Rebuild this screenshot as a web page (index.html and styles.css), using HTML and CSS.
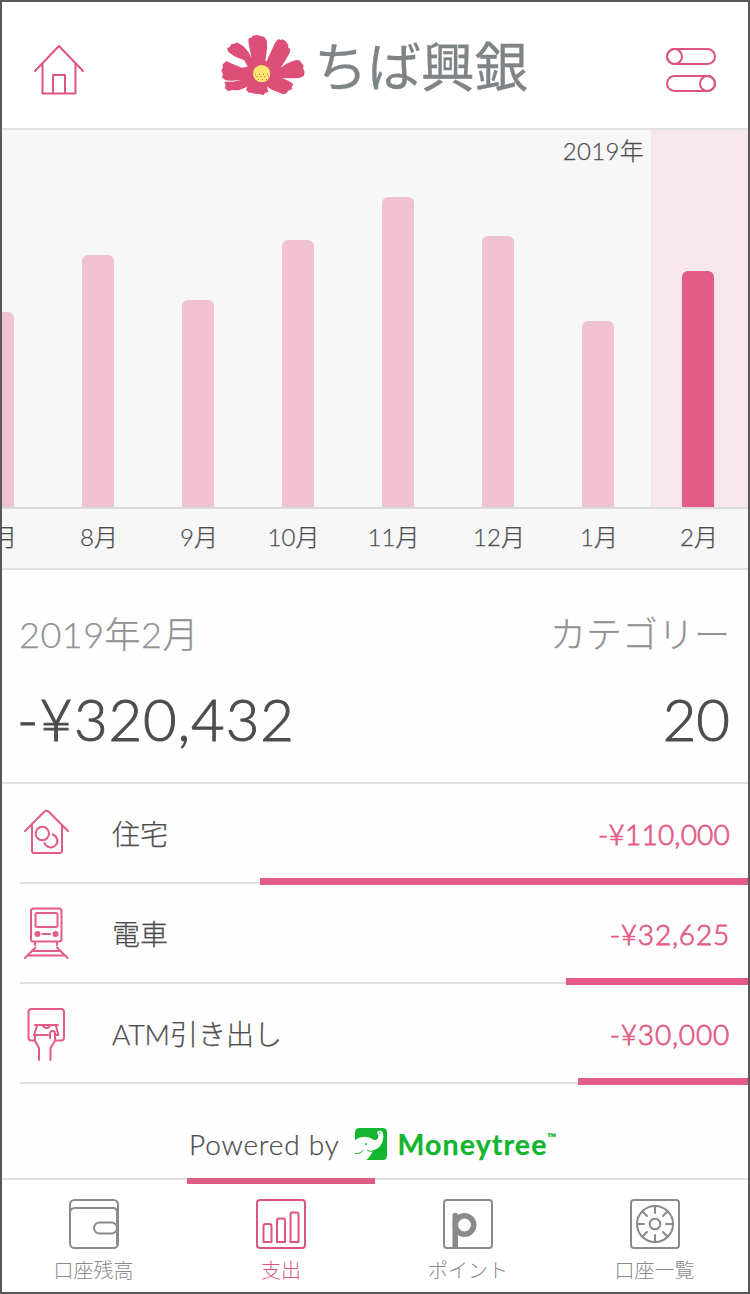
FILE: index.html
```html
<!DOCTYPE html>
<html lang="ja">
<head>
  <meta charset="UTF-8" />
  <meta name="viewport" content="width=device-width, initial-scale=1" />
  <title>ちば興銀</title>
  <link rel="stylesheet" href="styles.css">
</head>

<body>
  <div class="app">
    <div class="header">
      <svg class="icon" width="50" height="52" viewBox="0 0 50 52">
        <path d="M1 27 L25 2 L49 27 M8.500 20 V49.500 H41.500 V20 M19 49 V31 H31 V49" />
      </svg>
      <div class="logo">
        <svg class="flower" width="84" height="60" viewBox="36 30 252 180">
          <path fill="#dc4f78" d="M106 106 L80 96 L58 81 L54 69 L62 66 L68 56 L78 56 L82 52 L98 60 L106 66 L120 84 L127 98 L124 80 L118 50 L119 40 L127 38 L131 32 L146 30 L154 33 L166 35 L174 48 L174 72 L169 108 L173 108 L198 54 L208 42 L215 45 L220 43 L229 48 L238 59 L238 68 L244 73 L242 84 L228 108 L215 128 L235 115 L260 105 L271 106 L280 117 L284 121 L282 129 L287 141 L284 154 L270 159 L247 160 L220 160 L240 168 L253 178 L248 187 L250 192 L237 198 L233 205 L222 208 L204 200 L188 194 L174 184 L178 201 L168 204 L164 210 L149 207 L137 206 L127 203 L119 203 L111 194 L116 184 L105 190 L88 196 L71 195 L57 198 L47 189 L50 181 L46 170 L72 170 L96 165 L67 167 L49 166 L39 157 L42 147 L37 138 L42 126 L40 119 L52 108 L63 113 L98 128 L116 125 Z" />
          <circle cx="158" cy="146" r="26" fill="#fce773" />
          <path stroke="#b9603a" stroke-width="3" stroke-dasharray="3 9" fill="none" d="M138 148 H182 M142 155 H180 M147 163 H174" />
        </svg>
        <span class="logo-text">ちば興銀</span>
      </div>
      <svg class="icon" width="50" height="46" viewBox="0 0 50 46">
        <rect x="1" y="2" width="48" height="15" rx="7.500" />
        <circle cx="8.500" cy="9.500" r="7.500" />
        <rect x="1" y="29" width="48" height="15" rx="7.500" />
        <circle cx="41.500" cy="36.500" r="7.500" />
      </svg>
    </div>

    <!-- グラフ -->
    <div class="chart">
      <div class="months">
        <div class="month"><div class="plot"><div class="bar" style="height: 195px"></div></div><div class="name first">7月</div></div>
        <div class="month"><div class="plot"><div class="bar" style="height: 252px"></div></div><div class="name">8月</div></div>
        <div class="month"><div class="plot"><div class="bar" style="height: 207px"></div></div><div class="name">9月</div></div>
        <div class="month"><div class="plot"><div class="bar" style="height: 267px"></div></div><div class="name wide">10月</div></div>
        <div class="month"><div class="plot"><div class="bar" style="height: 310px"></div></div><div class="name wide">11月</div></div>
        <div class="month"><div class="plot"><div class="bar" style="height: 271px"></div></div><div class="name">12月</div></div>
        <div class="month"><div class="plot"><span class="year">2019年</span><div class="bar" style="height: 186px"></div></div><div class="name">1月</div></div>
        <div class="month active"><div class="plot"><div class="bar" style="height: 236px"></div></div><div class="name">2月</div></div>
      </div>
    </div>

    <div class="summary">
      <div>
        <div class="label date">2019年2月</div>
        <div class="value total">-¥320,432</div>
      </div>
      <div class="right">
        <div class="label">カテゴリー</div>
        <div class="value">20</div>
      </div>
    </div>

    <!-- カテゴリー一覧 -->
    <div class="list">
      <div class="row">
        <svg class="icon cat" width="52" height="56" viewBox="0 0 52 56">
          <path d="M5 24 L24.500 4.500 Q26.500 3 28.500 4.500 L48 24 M12 18 V43.500 Q12 46 14 46 H39.500 Q42 46 42 43.500 V18" />
          <circle cx="22.300" cy="26.500" r="6.700" />
          <path d="M32.500 27.500 A6.600 6.600 0 1 1 24.500 36" />
        </svg>
        <div class="row-name">住宅</div>
        <div class="amount long">-¥110,000</div>
        <div class="meter" style="width: 488px"></div>
      </div>
      <div class="row">
        <svg class="icon cat" width="52" height="56" viewBox="0 0 52 56">
          <rect x="11" y="1.500" width="30.500" height="33" rx="2.500" />
          <rect x="15.500" y="6" width="22" height="14" rx="1.500" />
          <path d="M22.500 27 H30 M15 35 V38 M37 35 V38 M15.500 40.500 L5 51 M37 40.500 L47.500 51 M13 44 H39.500 M8 48.500 H44" />
          <circle class="dot" cx="17.500" cy="27" r="2" />
          <circle class="dot" cx="35.500" cy="27" r="2" />
        </svg>
        <div class="row-name">電車</div>
        <div class="amount">-¥32,625</div>
        <div class="meter" style="width: 182px"></div>
      </div>
      <div class="row">
        <svg class="icon cat" width="52" height="56" viewBox="0 0 52 56">
          <path d="M15 33.500 H11.500 Q8.500 33.500 8.500 30.500 V5 Q8.500 2 11.500 2 H41 Q44 2 44 5 V30.500 Q44 33.500 41 33.500 H36 M15 18 H38 M17 19 L14 28 H28 M36 19 L38.500 28 H36 M23 19 Q26.500 23 30 19 M15 28 V34 L19 41 V53 M30 31 V26.500 Q30 24 32.500 24 Q35 24 35 26.500 V34 L30.500 41 V53" />
        </svg>
        <div class="row-name">ATM引き出し</div>
        <div class="amount">-¥30,000</div>
        <div class="meter" style="width: 170px"></div>
      </div>
    </div>

    <div class="powered">
      <span class="by">Powered by</span>
      <svg width="33" height="33" viewBox="0 0 33 33">
        <path fill="#13b52f" d="M0 12 V4.500 Q0 0 4.500 0 H27.500 Q32 0 32 4.500 V27.500 Q32 32 27.500 32 H11.500 Q16.500 27 18 22.500 Q26 20 28 12 Q28.800 7 27.500 4 Q25.500 1.500 23 3 Q21 5.500 23.500 7 Q23.500 11 21 12 Q19 12.500 16.500 10.500 Q8 6.500 0 12 Z" />
        <path d="M0 25.500 Q6 26 8 22 M12 22 Q15 24.500 19 23" fill="none" stroke="#13b52f" />
        <circle cx="11" cy="16" r="1" fill="#13b52f" />
        <circle cx="24.700" cy="5" r="0.800" fill="#13b52f" />
      </svg>
      <span class="brand">Moneytree</span><span class="tm">™</span>
    </div>

    <div class="tabs">
      <div class="tab">
        <svg class="icon" width="50" height="50" viewBox="0 0 50 50">
          <rect x="1" y="1" width="48" height="48" rx="4.500" />
          <path d="M1 14 Q1 9 6 9 H44 Q48 9 48 13 V24 M48 34 V45" />
          <rect x="25" y="23.500" width="23" height="11" rx="5.500" />
        </svg>
        <span>口座残高</span>
      </div>
      <div class="tab active">
        <svg class="icon" width="50" height="50" viewBox="0 0 50 50">
          <rect x="1" y="1" width="48" height="48" rx="3" />
          <path d="M7.500 43 V27 Q7.500 25 9.500 25 H13.500 Q15.500 25 15.500 27 V43 Z M21 43 V21.500 Q21 19.500 23 19.500 H27 Q29 19.500 29 21.500 V43 Z M34.500 43 V15.500 Q34.500 13.500 36.500 13.500 H40.500 Q42.500 13.500 42.500 15.500 V43 Z" />
        </svg>
        <span>支出</span>
      </div>
      <div class="tab">
        <svg class="icon" width="50" height="50" viewBox="0 0 50 50">
          <rect x="1" y="1" width="48" height="48" rx="3" />
          <path class="thick" d="M12.200 47 V16.500" />
          <circle class="thick" cx="21.500" cy="26" r="9.200" />
        </svg>
        <span>ポイント</span>
      </div>
      <div class="tab">
        <svg class="icon" width="50" height="50" viewBox="0 0 50 50">
          <rect x="1" y="1" width="48" height="48" rx="3" />
          <circle cx="25" cy="25" r="18" />
          <circle cx="25" cy="25" r="5.300" />
          <path d="M25 7 V14 M25 36 V43 M7 25 H14 M36 25 H43 M12.300 12.300 L17 17 M33 33 L37.700 37.700 M12.300 37.700 L17 33 M33 17 L37.700 12.300" />
        </svg>
        <span>口座一覧</span>
      </div>
    </div>
  </div>
</body>
</html>
```
FILE: styles.css
```css
* {
  box-sizing: border-box;
}
body {
  margin: 0;
  background: #fff;
  font-family: Lato, 'Noto Sans CJK JP', sans-serif;
  font-weight: 300;
  color: #4d4d4d;
  -webkit-text-stroke: 0.25px;
}
.app {
  height: 1294px;
  border: 2px solid #595757;
  background: #fefefe;
  display: flex;
  flex-direction: column;
  overflow: hidden;
}
.icon {
  display: block;
  fill: none;
  stroke: #dc5580;
  stroke-width: 2;
  stroke-linecap: round;
  stroke-linejoin: round;
}
.header {
  height: 128px;
  flex-shrink: 0;
  padding: 10px 32px 0;
  border-bottom: 2px solid #e0e0e0;
  background: #fff;
  display: flex;
  align-items: center;
  justify-content: space-between;
}
.logo {
  display: flex;
  align-items: center;
  gap: 9px;
  margin-top: -10px;
  margin-right: 1px;
}
.logo-text {
  font-family: 'Noto Sans CJK JP', sans-serif;
  font-size: 53.5px;
  line-height: 60px;
  margin-top: -2px;
  font-weight: 400;
  color: #7e8386;
  -webkit-text-stroke: 0.3px;
}
.chart {
  height: 440px;
  flex-shrink: 0;
  background: #f7f7f7;
  border-bottom: 2px solid #e0e0e0;
  overflow: hidden;
}
.months {
  display: flex;
  margin-left: -54px;
}
.month {
  width: 100px;
  flex-shrink: 0;
}
.plot {
  position: relative;
  height: 379px;
  border-bottom: 2px solid #dbdbdb;
  display: flex;
  align-items: flex-end;
  justify-content: center;
}
.bar {
  width: 32px;
  background: #f0c1d0;
  border-radius: 6px 6px 0 0;
}
.month.active .plot {
  background: linear-gradient(to right, #f7f7f7 3px, #f7e7ec 3px);
}
.month.active .bar {
  background: #e25c87;
}
.year {
  position: absolute;
  right: 4px;
  top: 4px;
  font-size: 24px;
  line-height: 34px;
  letter-spacing: 0.3px;
  white-space: nowrap;
}
.name {
  font-size: 24px;
  line-height: 56px;
  padding-left: 2px;
  text-align: center;
}
.name.first {
  padding-left: 0;
}
.name.wide {
  padding-left: 0;
  padding-right: 9px;
}
.summary {
  height: 214px;
  flex-shrink: 0;
  padding: 37px 18px 0;
  border-bottom: 2px solid #e0e0e0;
  display: flex;
  justify-content: space-between;
}
.right {
  text-align: right;
}
.label {
  font-size: 36px;
  line-height: 54px;
  color: #929292;
}
.label.date {
  margin-left: -1px;
  letter-spacing: 0.5px;
}
.value {
  font-size: 58px;
  line-height: 70px;
  margin-top: 23px;
  -webkit-text-stroke: 1px;
}
.value.total {
  margin-left: -3px;
  letter-spacing: 0.9px;
}
.row {
  position: relative;
  height: 100px;
  margin-left: 18px;
  border-bottom: 2px solid #e0e0e0;
  display: flex;
  align-items: center;
}
.row-name {
  font-size: 28px;
  margin-left: 40px;
  flex: 1;
}
.icon.cat {
  stroke: #e25c87;
  margin-top: 4px;
}
.dot {
  fill: #e25c87;
}
.amount {
  font-size: 28px;
  letter-spacing: 0.8px;
  color: #e25c87;
  margin: 1px 18px 0 0;
  -webkit-text-stroke: 0.8px;
}
.amount.long {
  letter-spacing: 0.2px;
}
.meter {
  position: absolute;
  right: 0;
  bottom: -3px;
  height: 7px;
  background: #e25c87;
}
.powered {
  height: 94px;
  flex-shrink: 0;
  padding: 26px 0 0 187px;
  display: flex;
  align-items: center;
}
.by {
  font-size: 28px;
  letter-spacing: 0.8px;
  margin-right: 15px;
}
.brand {
  margin-left: 10px;
  font-size: 28.5px;
  font-weight: 700;
  letter-spacing: 1.1px;
  color: #13b52f;
}
.tm {
  font-size: 12px;
  line-height: 14px;
  margin-top: -12px;
  font-weight: 700;
  color: #13b52f;
}
.tabs {
  flex: 1;
  border-top: 2px solid #e0e0e0;
  background: #fff;
  display: grid;
  grid-template-columns: 185px 188px 186px 1fr;
}
.tab {
  display: flex;
  flex-direction: column;
  align-items: center;
  padding-top: 19px;
  font-size: 20px;
  line-height: 43px;
  color: #8a8a8a;
  -webkit-text-stroke: 0;
}
.tab:first-child {
  padding-right: 2px;
}
.tab .icon {
  stroke: #8a8a8a;
}
.tab.active {
  margin-top: -2px;
  padding-top: 15px;
  border-top: 6px solid #dc5e85;
  color: #dc5580;
}
.tab.active .icon {
  stroke: #dc5580;
}
.icon .thick {
  stroke-width: 5.5;
}
```
